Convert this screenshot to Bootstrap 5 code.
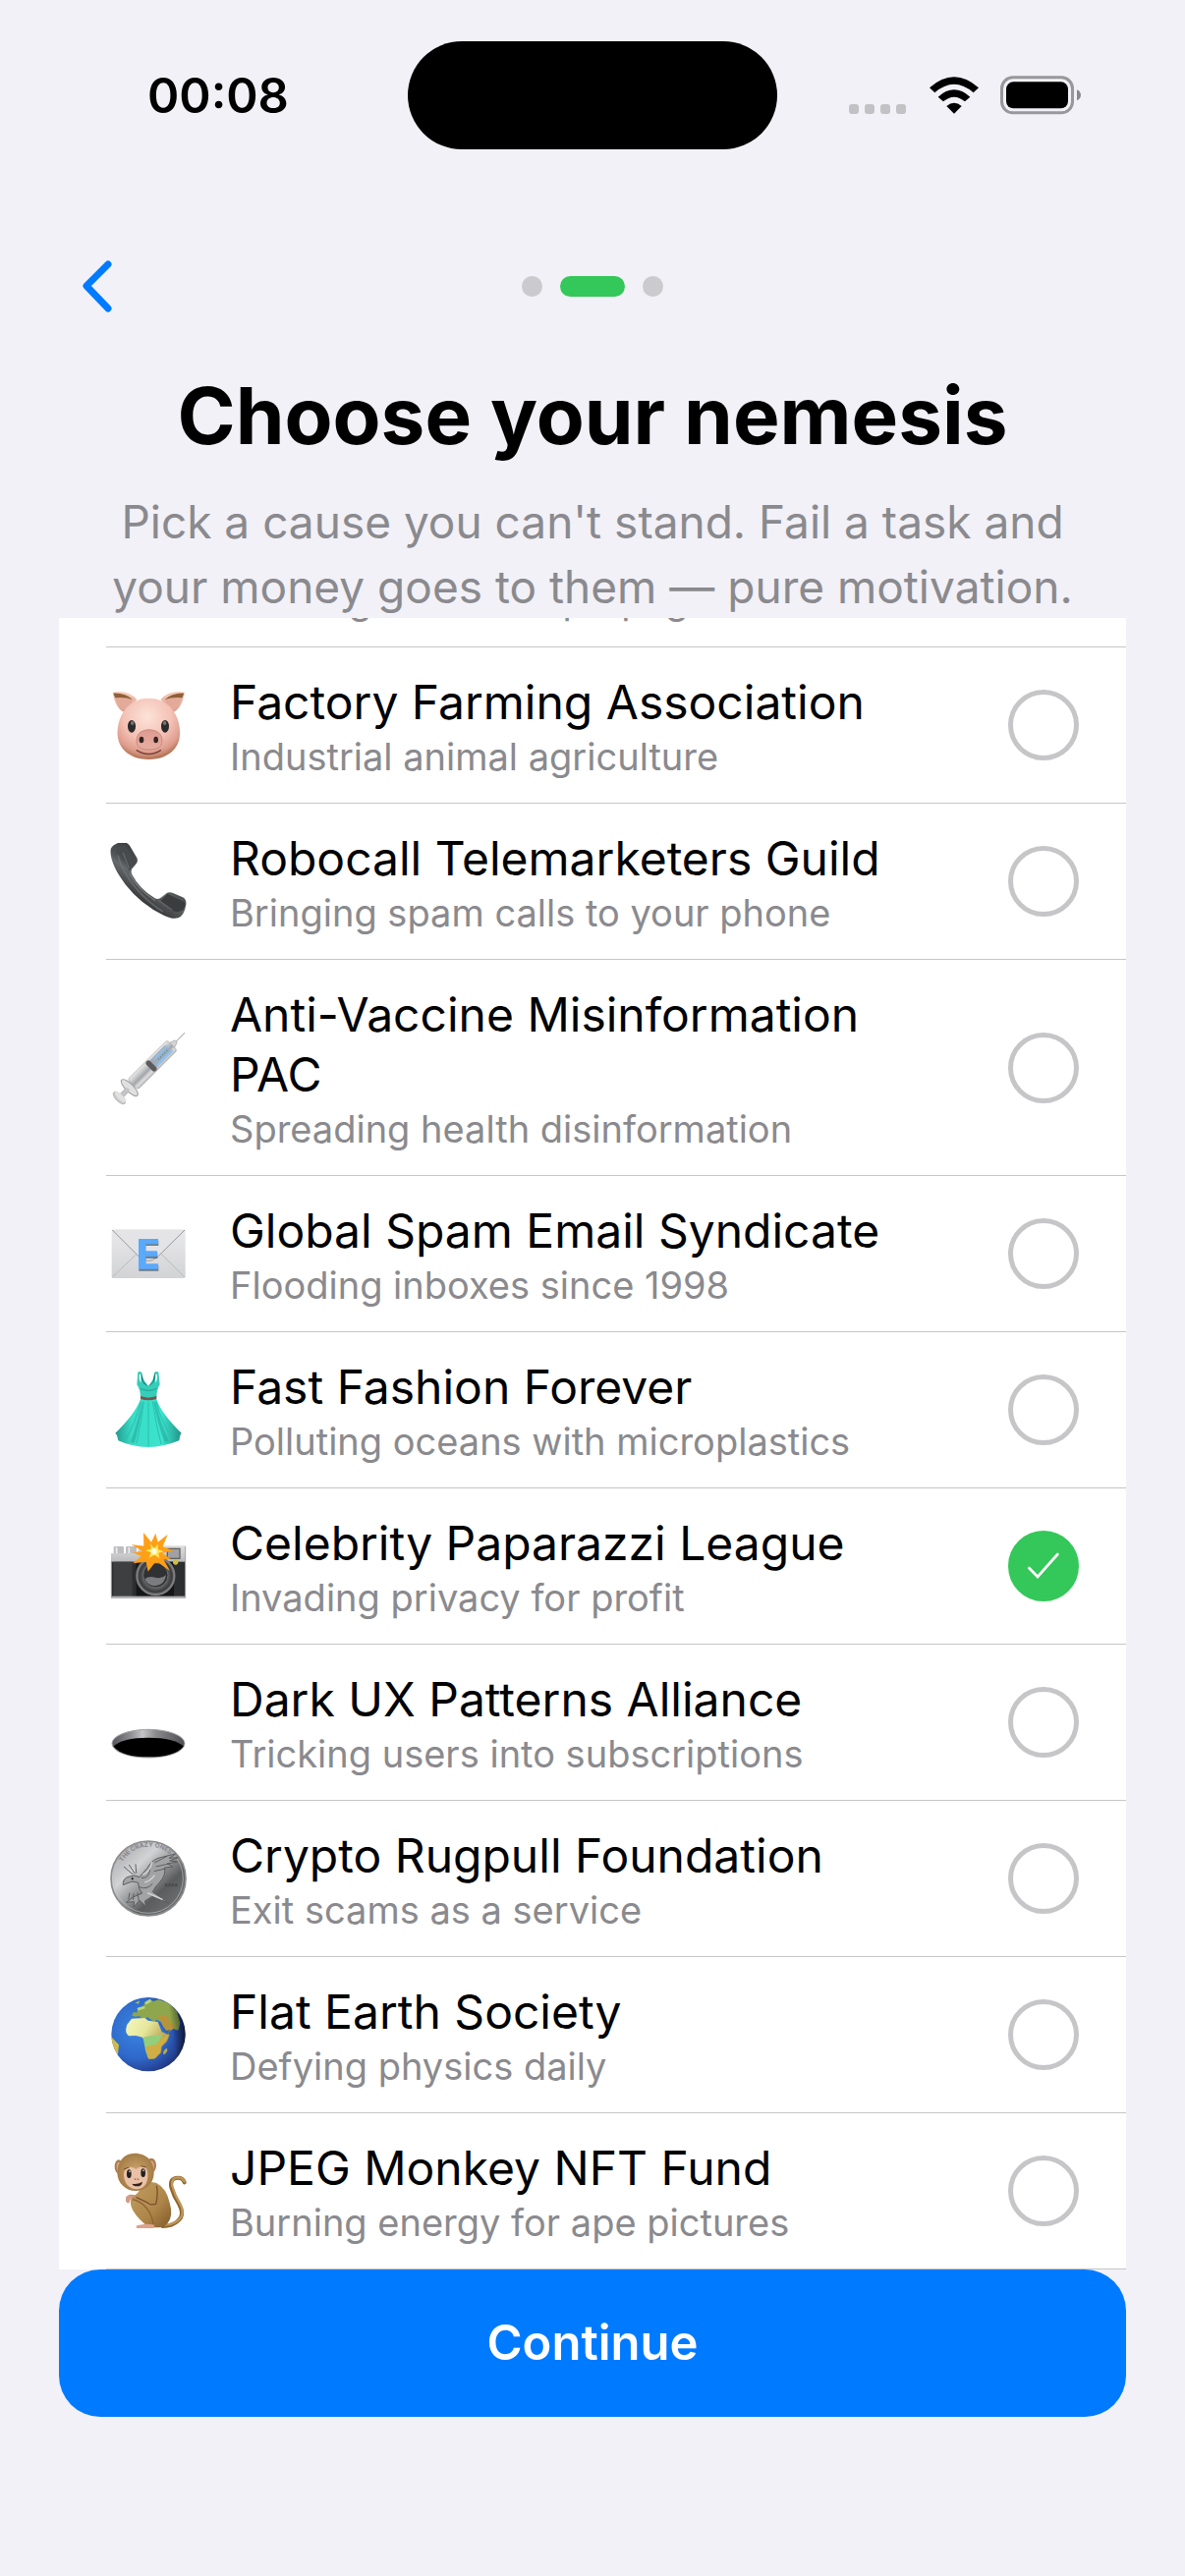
<!DOCTYPE html>
<html lang="en">
<head>
<meta charset="utf-8">
<meta name="viewport" content="width=device-width, initial-scale=1">
<title>Choose your nemesis</title>
<link rel="stylesheet" href="https://cdn.jsdelivr.net/npm/bootstrap@5.3.0/dist/css/bootstrap.min.css">
<style>
  :root { --ios-bg:#f2f1f7; --ios-blue:#007aff; --ios-green:#34c759; --ios-grey:#8a8a8e; --ios-line:#c6c6c8; }
  body { background:var(--ios-bg); color:#000; font-family:Inter,"Noto Sans",sans-serif; }
  .status-bar { display:grid; grid-template-columns:1fr auto 1fr; padding:42px 106px 0 150px; }
  .status-bar .island { width:376px; height:110px; background:#000; margin-left:-44px; }
  .clock { font-size:49px; font-weight:600; line-height:60px; padding-top:2px; }
  .signal { gap:6px; padding-top:28px; }
  .signal span { width:10px; height:10px; border-radius:3px; background:#c2c2c5; }
  .battery { margin-left:22px; }
  .wizard-nav { display:grid; grid-template-columns:1fr auto 1fr; padding:0 78px; margin-top:104px; height:70px; }
  .back-btn { width:42px; height:70px; }
  .steps { gap:18px; }
  .steps span { width:21px; height:21px; background:#cbcbcf; }
  .steps .current { width:66px; background:var(--ios-green); }
  .intro { padding:47px 60px 0; height:303px; }
  .intro h1 { font-size:80px; font-weight:700; line-height:100px; margin-bottom:25px; }
  .intro p { font-size:46px; line-height:66px; color:var(--ios-grey); }
  .choices { margin:0 60px; background:#fff; min-height:0; }
  .choice { margin-left:48px; padding:21px 48px 21px 0; border-bottom:1px solid var(--ios-line); cursor:pointer; }
  .choice-text { padding-top:4px; }
  .emoji { width:86px; margin-right:40px; }
  .emoji svg { width:78px; height:78px; display:block; margin:0 auto; }
  .cause { font-size:48px; line-height:61px; }
  .tagline { font-size:38px; line-height:51px; color:var(--ios-grey); }
  .choice .form-check-input { width:72px; height:72px; margin:0 0 0 48px; border:5px solid var(--ios-line); background-color:#fff; }
  .choice .form-check-input:checked { border-color:var(--ios-green); background-color:var(--ios-green); background-origin:border-box; background-size:72px 72px;
    background-image:url("data:image/svg+xml,%3csvg xmlns='http://www.w3.org/2000/svg' viewBox='0 0 216 216'%3e%3cpath d='M64 114l26 27 61-69' fill='none' stroke='%23fff' stroke-width='8' stroke-linecap='round' stroke-linejoin='miter'/%3e%3c/svg%3e"); }
  .footer-bar { padding:0 60px 162px; }
  .continue-btn { height:150px; border-radius:42px; background:var(--ios-blue); color:#fff; font-size:49px; font-weight:600; }
  .continue-btn:hover { background:#0070ea; color:#fff; }
</style>
<script src="https://cdn.jsdelivr.net/npm/bootstrap@5.3.0/dist/js/bootstrap.bundle.min.js"></script>
</head>
<body class="vh-100 d-flex flex-column overflow-hidden">

<header class="flex-shrink-0">
  <div class="status-bar align-items-center">
    <div class="clock">00:08</div>
    <div class="island rounded-pill"></div>
    <div class="d-flex justify-content-end align-items-center">
      <div class="signal d-flex"><span></span><span></span><span></span><span></span></div>
      <svg class="ms-4" width="50" height="38" viewBox="0 0 150 114" aria-label="Wi-Fi">
        <path d="M0 34Q75-32 150 34L134 49Q75-2 16 49Z"/>
        <path d="M26 62Q75 18 124 62L108 76Q75 48 42 76Z"/>
        <path d="M52 90Q75 70 98 90L75 113Z"/>
      </svg>
      <svg class="battery" width="82" height="40" viewBox="0 0 246 120" aria-label="Battery full">
        <rect x="4.500" y="5.500" width="216" height="108" rx="34" fill="none" stroke="#98979b" stroke-width="9"/>
        <rect x="18" y="19" width="189" height="81" rx="22"/>
        <path d="M234 43c16 7 16 26 0 33z" fill="#89888c"/>
      </svg>
    </div>
  </div>

  <nav class="wizard-nav align-items-center" aria-label="Setup steps">
    <button type="button" class="btn border-0 p-0 back-btn" aria-label="Back">
      <svg class="d-block" width="42" height="70" viewBox="0 0 42 70" fill="none" stroke="#007aff" stroke-width="7" stroke-linecap="round" stroke-linejoin="round"><path d="M32 13L10 35l22 23"/></svg>
    </button>
    <div class="steps d-flex"><span class="rounded-circle"></span><span class="current rounded-pill"></span><span class="rounded-circle"></span></div>
  </nav>

  <div class="intro text-center">
    <h1>Choose your nemesis</h1>
    <p class="mb-0">Pick a cause you can't stand. Fail a task and<br>your money goes to them — pure motivation.</p>
  </div>
</header>

<main class="choices flex-grow-1 d-flex flex-column justify-content-end overflow-hidden">

  <div class="choice d-flex align-items-center flex-shrink-0">
    <span class="emoji flex-shrink-0"></span>
    <span class="choice-text flex-grow-1"><span class="tagline d-block">Funding fossil fuel propaganda</span></span>
  </div>

  <label class="choice d-flex align-items-center flex-shrink-0">
    <span class="emoji flex-shrink-0"><svg viewBox="156 237 234 234">
      <defs>
        <radialGradient id="pigSkin" cx=".48" cy=".3" r=".7"><stop offset="0" stop-color="#fde3d8"/><stop offset=".55" stop-color="#f4c1b5"/><stop offset=".85" stop-color="#dd9c8c"/><stop offset="1" stop-color="#b07050"/></radialGradient>
        <linearGradient id="pigEar" x1="0" y1="0" x2="0" y2="1"><stop offset="0" stop-color="#f7cdbb"/><stop offset="1" stop-color="#d99c8c"/></linearGradient>
        <linearGradient id="pigNose" x1="0" y1="0" x2="0" y2="1"><stop offset="0" stop-color="#dc9c92"/><stop offset="1" stop-color="#e8aea2"/></linearGradient>
      </defs>
      <path d="M164 254q46-9 74 22l-36 40q-30-12-38-62z" fill="url(#pigEar)"/><path d="M168 259q34-2 56 20l-18 32q-30-14-38-52z" fill="#e3aa9a"/><path d="M166 257q36-2 60 20-26-10-54-6z" fill="#8e6038"/>
      <path d="M384 254q-46-9-74 22l36 40q30-12 38-62z" fill="url(#pigEar)"/><path d="M380 259q-34-2-56 20l18 32q30-14 38-52z" fill="#e3aa9a"/><path d="M382 257q-36-2-60 20 26-10 54-6z" fill="#8e6038"/>
      <path d="M274 272c54 0 90 40 95 96 5 58-38 91-95 91s-100-33-95-91c5-56 41-96 95-96z" fill="url(#pigSkin)"/>
      <ellipse cx="222" cy="358" rx="12" ry="19" fill="#2c2b2c"/><ellipse cx="324" cy="358" rx="12" ry="19" fill="#2c2b2c"/>
      <ellipse cx="224" cy="348" rx="5" ry="6" fill="#78777a"/><ellipse cx="323" cy="348" rx="5" ry="6" fill="#78777a"/>
      <path d="M238 394c4-34 70-34 76 0 4 24-10 35-38 35s-43-10-38-35z" fill="url(#pigNose)" stroke="#cd887c" stroke-width="3"/>
      <ellipse cx="252" cy="399" rx="7" ry="10" fill="#35231f"/><ellipse cx="296" cy="399" rx="7" ry="10" fill="#35231f"/>
      <path d="M236 430q38 25 76 0" fill="none" stroke="#774439" stroke-width="4"/>
    </svg></span>
    <span class="choice-text flex-grow-1"><span class="cause d-block">Factory Farming Association</span><span class="tagline d-block">Industrial animal agriculture</span></span>
    <input class="form-check-input flex-shrink-0" type="radio" name="nemesis">
  </label>

  <label class="choice d-flex align-items-center flex-shrink-0">
    <span class="emoji flex-shrink-0"><svg viewBox="156 714 234 234">
      <defs><linearGradient id="phoneBody" x1=".7" y1=".2" x2=".3" y2=".8"><stop offset="0" stop-color="#333537"/><stop offset=".45" stop-color="#515456"/><stop offset=".55" stop-color="#66696b"/><stop offset="1" stop-color="#292a2b"/></linearGradient></defs>
      <path d="M204 713q6 2 12 9l22 38q5 10-4 20l-11 13q-4 7 0 17 22 44 70 73 8 5 17-1l18-14q8-6 20-1l30 13q12 7 10 22-5 33-24 41-18 5-44-8-70-34-116-93c-28-36-50-78-46-108 2-13 26-26 46-21z" fill="url(#phoneBody)"/>
      <path d="M200 719l30 45q5 9-2 17l-14 19q-10-32-36-55-6-18 22-26z" fill="#484b4d"/>
      <path d="M331 869l52 25q5 6-1 22-18 18-44-2l-28-23z" fill="#3a3c3e"/>
      <path d="M180 752q10 45 52 96 40 48 86 76" fill="none" stroke="#777a7c" stroke-width="5" opacity=".6"/>
      <path d="M216 808q22 46 78 82" fill="none" stroke="#8a8d8f" stroke-width="4" opacity=".6"/>
      <path d="M302 888l44 30M196 744l18 48" stroke="#808385" stroke-width="4" opacity=".5"/>
    </svg></span>
    <span class="choice-text flex-grow-1"><span class="cause d-block">Robocall Telemarketers Guild</span><span class="tagline d-block">Bringing spam calls to your phone</span></span>
    <input class="form-check-input flex-shrink-0" type="radio" name="nemesis">
  </label>

  <label class="choice d-flex align-items-center flex-shrink-0">
    <span class="emoji flex-shrink-0"><svg viewBox="156 202 234 234">
      <defs><linearGradient id="barrel" x1="0" y1="0" x2="1" y2="0"><stop offset="0" stop-color="#e9e9ea"/><stop offset=".3" stop-color="#c7c8ca"/><stop offset=".55" stop-color="#a4a5a8"/><stop offset=".8" stop-color="#dededf"/><stop offset="1" stop-color="#b5b5b8"/></linearGradient></defs>
      <path d="M344 252l40-40" stroke="#8f8f8f" stroke-width="3"/>
      <g transform="rotate(45 270 325)">
        <path d="M259 220l6-18h10l6 18z" fill="#d3d4d6" stroke="#a7a7aa" stroke-width="2"/>
        <rect x="248" y="218" width="44" height="170" rx="8" fill="url(#barrel)" stroke="#a9aaac" stroke-width="2"/>
        <rect x="255" y="234" width="30" height="66" fill="#a2abb6"/>
        <rect x="278" y="228" width="6" height="66" fill="#8ac3f5"/><rect x="259" y="228" width="5" height="62" fill="#8ac3f5"/>
        <path d="M271 240v44" stroke="#3f7f98" stroke-width="3" stroke-dasharray="3 6"/>
        <rect x="250" y="300" width="40" height="16" rx="7" fill="#5b5b5d"/>
        <rect x="262" y="386" width="16" height="50" fill="#b1b2b4"/>
        <ellipse cx="270" cy="402" rx="34" ry="12" fill="#e0e0e1" stroke="#9e9fa1" stroke-width="3"/>
        <rect x="264" y="406" width="12" height="30" fill="#c4c4c6"/>
        <ellipse cx="270" cy="446" rx="24" ry="11" fill="#cacaca" stroke="#a7a7a8" stroke-width="2"/><ellipse cx="270" cy="442" rx="22" ry="8" fill="#e1e1e2"/>
      </g>
    </svg></span>
    <span class="choice-text flex-grow-1"><span class="cause d-block">Anti-Vaccine Misinformation PAC</span><span class="tagline d-block">Spreading health disinformation</span></span>
    <input class="form-check-input flex-shrink-0" type="radio" name="nemesis">
  </label>

  <label class="choice d-flex align-items-center flex-shrink-0">
    <span class="emoji flex-shrink-0"><svg viewBox="156 771 234 234">
      <defs><linearGradient id="paper" x1="0" y1="0" x2="0" y2="1"><stop offset="0" stop-color="#e9e9eb"/><stop offset="1" stop-color="#d2d3d5"/></linearGradient></defs>
      <rect x="161" y="814" width="225" height="149" rx="5" fill="url(#paper)"/>
      <path d="M163 960l74-71M384 960l-72-71" stroke="#b9babc" stroke-width="3"/>
      <path d="M163 816l82 82q28 24 56 0l83-82" fill="#e4e4e6" stroke="#97989a" stroke-width="3"/>
      <path d="M244 848h60v16h-39v22h36v17h-36v22h39v16h-60z" fill="#3c566f" opacity=".7"/>
      <path d="M243 843h60v16h-38v21h35v16h-35v23h38v16h-60z" fill="#5aa9fb"/>
    </svg></span>
    <span class="choice-text flex-grow-1"><span class="cause d-block">Global Spam Email Syndicate</span><span class="tagline d-block">Flooding inboxes since 1998</span></span>
    <input class="form-check-input flex-shrink-0" type="radio" name="nemesis">
  </label>

  <label class="choice d-flex align-items-center flex-shrink-0">
    <span class="emoji flex-shrink-0"><svg viewBox="156 108 234 234">
      <defs><linearGradient id="skirt" x1="0" y1="0" x2="1" y2="0"><stop offset="0" stop-color="#22998f"/><stop offset=".25" stop-color="#39dcc6"/><stop offset=".7" stop-color="#3be4cd"/><stop offset="1" stop-color="#219389"/></linearGradient></defs>
      <path d="M241 110q4-4 11 0 2 22 21 42 18-20 19-42 6-4 12 0l4 38q-10 16-10 38h-49q0-22-11-38z" fill="#36cdb9"/>
      <path d="M252 110q-6 22 8 36l13 8-15-16zM292 110q7 22-8 36l-11 8 14-16z" fill="#1c867e"/>
      <path d="M246 116q-3 18 5 26-1-15-1-26M299 116q3 18-5 26 1-15 1-26" fill="#fff"/>
      <path d="M249 192h49q14 44 76 104l-4 7-3 16q-46 19-94 20-52-1-92-20l-4-16-5-7q62-60 77-104z" fill="url(#skirt)"/>
      <path d="M250 200q-16 65-46 115M259 200q-8 60-22 128M273 200v136M286 200q8 60 26 130M297 200q14 60 48 108" fill="none" stroke="#2bbfae" stroke-width="3"/>
      <path d="M254 200q-16 70-36 124l12 3q17-60 26-127zM289 200q12 70 34 124l12-4q-26-58-40-120z" fill="#27aa9c" opacity=".6"/>
      <path d="M249 183q24 8 49 0v9q-25 8-49 0z" fill="#79554d"/>
      <path d="M248 160q26 12 50 0" fill="none" stroke="#24a294" stroke-width="3"/>
    </svg></span>
    <span class="choice-text flex-grow-1"><span class="cause d-block">Fast Fashion Forever</span><span class="tagline d-block">Polluting oceans with microplastics</span></span>
    <input class="form-check-input flex-shrink-0" type="radio" name="nemesis">
  </label>

  <label class="choice d-flex align-items-center flex-shrink-0">
    <span class="emoji flex-shrink-0"><svg viewBox="156 585 234 234">
      <defs>
        <linearGradient id="camTop" x1="0" y1="0" x2="0" y2="1"><stop offset="0" stop-color="#dededf"/><stop offset="1" stop-color="#b9b9bb"/></linearGradient>
        <radialGradient id="camLens"><stop offset="0" stop-color="#6e6f71"/><stop offset=".4" stop-color="#323334"/><stop offset=".65" stop-color="#606163"/><stop offset=".85" stop-color="#3d3e3f"/><stop offset="1" stop-color="#4d4e4f"/></radialGradient>
      </defs>
      <rect x="167" y="642" width="31" height="24" rx="4" fill="#bdbdbf"/><rect x="204" y="642" width="33" height="24" rx="4" fill="#bdbdbf"/><path d="M176 645v18M214 645v18" stroke="#eee" stroke-width="5"/>
      <path d="M159 663h79l8-23h141v50H159z" fill="url(#camTop)"/>
      <rect x="159" y="689" width="228" height="108" fill="#2d2e30"/><rect x="166" y="689" width="58" height="106" fill="#3d3f41"/><rect x="236" y="689" width="115" height="108" fill="#151617"/>
      <rect x="159" y="794" width="228" height="7" fill="#b2b2b4"/><path d="M160 689v108M386 642v155" stroke="#a8a8aa" stroke-width="3"/>
      <rect x="331" y="649" width="38" height="30" fill="#a1a1a3" stroke="#626264" stroke-width="4"/>
      <circle cx="356" cy="690" r="8" fill="#cfbf42"/>
      <circle cx="295" cy="732" r="57" fill="url(#camLens)" stroke="#7c7c7e" stroke-width="7"/>
      <circle cx="295" cy="730" r="38" fill="#303132" stroke="#6c6d6f" stroke-width="3"/>
      <path d="M262 742q12-10 32-5t33-8q-3 30-33 34-25-1-32-21z" fill="#7b7c7e"/>
      <path d="M258 600l24 29 13-27 7 27 30-24-15 38 32 12-34 7 26 18-22 2 20 35-34-25-14 2-19 25-6-30-40 5 25-22-25-11 29-4-34-21 38 5z" fill="#ff9f16"/>
      <path d="M278 634l13 13 11-13 1 18 17 5-16 5 3 16-15-10-18 9 7-16-17-6 18-6z" fill="#ffe85b"/><circle cx="290" cy="657" r="9" fill="#fffde0"/>
    </svg></span>
    <span class="choice-text flex-grow-1"><span class="cause d-block">Celebrity Paparazzi League</span><span class="tagline d-block">Invading privacy for profit</span></span>
    <input class="form-check-input flex-shrink-0" type="radio" name="nemesis" checked>
  </label>

  <label class="choice d-flex align-items-center flex-shrink-0">
    <span class="emoji flex-shrink-0"><svg viewBox="156 162 234 234">
      <defs><linearGradient id="rim" x1="0" y1="0" x2="1" y2="0"><stop offset="0" stop-color="#55565a"/><stop offset=".25" stop-color="#8d8d91"/><stop offset=".42" stop-color="#c4c4c6"/><stop offset=".6" stop-color="#8c8c8f"/><stop offset="1" stop-color="#4d4d50"/></linearGradient></defs>
      <ellipse cx="273" cy="344" rx="111" ry="43" fill="url(#rim)" stroke="#a3a3a5" stroke-width="3"/>
      <path d="M167 352q26-26 106-26t107 26q-24 33-107 33t-106-33z"/>
    </svg></span>
    <span class="choice-text flex-grow-1"><span class="cause d-block">Dark UX Patterns Alliance</span><span class="tagline d-block">Tricking users into subscriptions</span></span>
    <input class="form-check-input flex-shrink-0" type="radio" name="nemesis">
  </label>

  <label class="choice d-flex align-items-center flex-shrink-0">
    <span class="emoji flex-shrink-0"><svg viewBox="156 639 234 234">
      <defs>
        <linearGradient id="silver" x1=".15" y1=".1" x2=".85" y2=".85"><stop offset="0" stop-color="#aeafb1"/><stop offset=".3" stop-color="#d2d3d5"/><stop offset=".55" stop-color="#939496"/><stop offset=".75" stop-color="#5b5c5e"/><stop offset="1" stop-color="#6c6d6f"/></linearGradient>
        <path id="coinArc" d="M194 706A94 94 0 0 1 356 704"/>
      </defs>
      <circle cx="273" cy="756" r="114" fill="url(#silver)" stroke="#8b8c8e" stroke-width="5"/>
      <circle cx="273" cy="756" r="106" fill="none" stroke="#c2c3c5" stroke-width="2"/>
      <text font-family="Inter,sans-serif" font-size="19" font-weight="700" fill="#85868a"><textPath href="#coinArc">THE CRAZY ONES</textPath></text>
      <path d="M196 776q-2-16 12-24l22-5 16 5 24-28q14-28 44-33l42-10-20 13 28-2-26 10 24 3-32 6 18 9-26 3q6 22-14 44-16 16-22 30l48 34-50-20-22 14 4 16-20-18-18 20 2-16-24 2 20-16 28-12q-12-14-12-32-18-8-32 1z" fill="#a2a3a5" stroke="#5d5e60" stroke-width="3"/>
      <path d="M226 744l-28-24M232 742l-18-28M236 740l-2-28M292 708l38-20M296 720l44-10M290 734l36-8M252 754q22 4 26-26M246 782q22 10 40-10M216 800l-4 20M228 802l-2 20M240 800l4 24" stroke="#5e5f61" stroke-width="3" fill="none"/>
      <path d="M256 744q22-8 28-38M262 768q18-4 30-22M270 800l46 20" stroke="#d5d5d6" stroke-width="4" fill="none"/>
      <circle cx="224" cy="757" r="3"/>
      <path d="M324 776h40" stroke="#4b4b4d" stroke-width="9" stroke-dasharray="7 3"/>
    </svg></span>
    <span class="choice-text flex-grow-1"><span class="cause d-block">Crypto Rugpull Foundation</span><span class="tagline d-block">Exit scams as a service</span></span>
    <input class="form-check-input flex-shrink-0" type="radio" name="nemesis">
  </label>

  <label class="choice d-flex align-items-center flex-shrink-0">
    <span class="emoji flex-shrink-0"><svg viewBox="156 156 234 234">
      <defs>
        <radialGradient id="ocean" cx=".35" cy=".42" r=".7"><stop offset="0" stop-color="#3b85e0"/><stop offset=".55" stop-color="#2f69cb"/><stop offset=".85" stop-color="#243f90"/><stop offset="1" stop-color="#1c2238"/></radialGradient>
        <linearGradient id="land" x1="0" y1="0" x2="1" y2=".6"><stop offset="0" stop-color="#f4f7be"/><stop offset=".45" stop-color="#e6e79b"/><stop offset="1" stop-color="#a88b38"/></linearGradient>
        <linearGradient id="globeShade" x1=".3" y1=".5" x2="1" y2=".4"><stop offset=".72" stop-color="#000" stop-opacity="0"/><stop offset="1" stop-color="#000" stop-opacity=".65"/></linearGradient>
        <clipPath id="globe"><circle cx="273" cy="272" r="113"/></clipPath>
      </defs>
      <g clip-path="url(#globe)">
        <rect x="156" y="156" width="234" height="234" fill="url(#ocean)"/>
        <path d="M222 214l6-10 10 2 4-16 16-3 4-14 16-9 10 8 16-6 34 12 22 24 10 36-6 22-16-6-12-22-12-6-8 10-18-9-8 6-20-14-10 7-16-10-12 2z" fill="#8fa74c"/>
        <path d="M264 178l16-10M240 196l22-7" stroke="#b4d58a" stroke-width="8"/>
        <path d="M302 216l28-2 14 24 12 12-22 16-14-14z" fill="#b5943b"/>
        <path d="M208 242l14-18 40-2 10 8 30 4 12 30 18 8 6 2-8 20-16 16-2 18-18 18-20 1-8-22-2-25-9-19-20-5-22 1q-14-10-5-35z" fill="url(#land)"/>
        <path d="M257 282q24-8 58-8l-17 34-10 38-16-2-8-24z" fill="#93ce7b"/>
        <path d="M264 310l34-8 16-18 22-14-8 22-16 16-2 18-18 20-18 1z" fill="#cfae45"/>
        <path d="M306 236l20 28 14-4" fill="none" stroke="#2e61ba" stroke-width="4"/>
        <path d="M318 332q0-14 12-18l1 9-8 10z" fill="#b9a948"/>
        <path d="M160 280l10 10 13 14-3 30-10 4-12-20z" fill="#cfba4c"/>
        <path d="M232 176l14-7-3 10z" fill="#9dbb6b"/>
        <rect x="156" y="156" width="234" height="234" fill="url(#globeShade)"/>
      </g>
    </svg></span>
    <span class="choice-text flex-grow-1"><span class="cause d-block">Flat Earth Society</span><span class="tagline d-block">Defying physics daily</span></span>
    <input class="form-check-input flex-shrink-0" type="radio" name="nemesis">
  </label>

  <label class="choice d-flex align-items-center flex-shrink-0">
    <span class="emoji flex-shrink-0"><svg viewBox="156 633 234 234">
      <defs>
        <linearGradient id="fur" x1="0" y1="0" x2="1" y2="1"><stop offset="0" stop-color="#c39f62"/><stop offset=".6" stop-color="#ad8548"/><stop offset="1" stop-color="#80592a"/></linearGradient>
        <radialGradient id="furHead"><stop offset="0" stop-color="#cba771"/><stop offset="1" stop-color="#a57c45"/></radialGradient>
      </defs>
      <path d="M383 724q-6-17-27-13-18 5-13 28 8 28 24 52 18 32-3 50-18 17-48 17" fill="none" stroke="#8c632f" stroke-width="12" stroke-linecap="round"/>
      <path d="M383 722q-6-15-26-12-15 5-11 26 8 28 24 54 16 30-4 48-18 16-46 16" fill="none" stroke="#be9758" stroke-width="7" stroke-linecap="round"/>
      <path d="M252 738q10-22 46-12 30 16 40 60 12 40-6 62-10 15-42 14l-14 0q-32-22-50-52-14-26-2-42 18-8 28-30z" fill="url(#fur)"/>
      <path d="M205 782q-4-16 10-20 20-4 52 22l32 6-22 10q-34-20-56-28-8 4-10 17z" fill="#b98f59"/>
      <path d="M205 783q-4-16 10-20l16 3q-14 6-16 21z" fill="#d59c85"/>
      <path d="M298 734q6 24-2 56l-16 2q-20-12-44-22" fill="none" stroke="#79522a" stroke-width="4"/>
      <path d="M224 776q54 12 66 82" fill="none" stroke="#8c6431" stroke-width="4"/>
      <path d="M238 856q28-8 54-2l-3 10h-50q-6-3-1-8z" fill="#dda28a"/>
      <ellipse cx="182" cy="676" rx="12" ry="21" fill="#a87d4c"/><ellipse cx="282" cy="672" rx="15" ry="22" fill="#a87d4c"/>
      <ellipse cx="183" cy="678" rx="7" ry="16" fill="#dea18b"/><ellipse cx="282" cy="674" rx="9" ry="16" fill="#dea18b"/>
      <path d="M231 635c38 0 60 27 59 61-1 33-26 54-56 54s-55-23-56-54c-1-34 20-61 53-61z" fill="url(#furHead)"/>
      <path d="M235 684c26-20 37-2 36 18 0 28-12 42-34 43-22 0-37-16-39-42-2-22 18-35 37-19z" fill="#eac1a6"/>
      <ellipse cx="214" cy="698" rx="7" ry="13" fill="#25201d"/><ellipse cx="257" cy="695" rx="7" ry="13" fill="#25201d"/><circle cx="216" cy="691" r="3" fill="#aaa"/><circle cx="258" cy="688" r="3" fill="#aaa"/>
      <path d="M198 684l16-6M250 674l16 4" stroke="#6c4724" stroke-width="3"/>
      <path d="M231 712l4 5M240 712l3 5" stroke="#7b4a32" stroke-width="3"/>
      <path d="M223 728q16 3 32-6-2 14-16 14-12 0-16-8z" fill="#362219"/>
    </svg></span>
    <span class="choice-text flex-grow-1"><span class="cause d-block">JPEG Monkey NFT Fund</span><span class="tagline d-block">Burning energy for ape pictures</span></span>
    <input class="form-check-input flex-shrink-0" type="radio" name="nemesis">
  </label>
</main>

<footer class="footer-bar flex-shrink-0">
  <button type="button" class="btn continue-btn w-100 border-0">Continue</button>
</footer>
</body>
</html>
